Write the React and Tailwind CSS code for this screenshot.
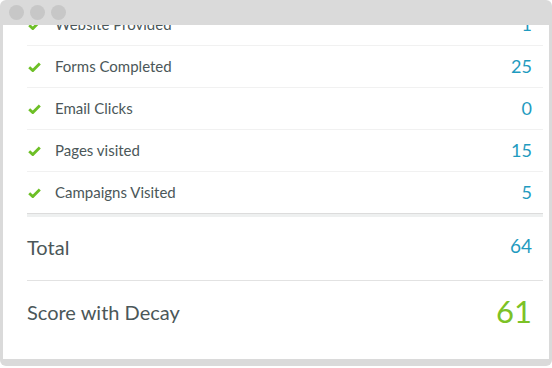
import React from "react";

const Check = () => (
  <svg width="13" height="10" viewBox="0 0 13 10" className="shrink-0">
    <path d="M1.2 5.2 L4.8 8.6 L11.8 1.4" fill="none" stroke="#6dbf26" strokeWidth="2.8" strokeLinejoin="miter" />
  </svg>
);

const rows = [
  ["Website Provided", "1"],
  ["Forms Completed", "25"],
  ["Email Clicks", "0"],
  ["Pages visited", "15"],
  ["Campaigns Visited", "5"],
];

export default function App() {
  return (
    <div className="w-[552px] h-[368px] bg-white overflow-hidden" style={{ fontFamily: "Lato, 'Open Sans', sans-serif" }}>
      <div className="h-[366px] bg-[#dadada] rounded-[6px] flex flex-col px-[3px] pb-[7px]">
        <div className="h-[25px] shrink-0 flex items-start pt-[5px] pl-[6px] gap-[6px]">
          <div className="w-[15px] h-[15px] rounded-full bg-[#c7c7c7]" />
          <div className="w-[15px] h-[15px] rounded-full bg-[#c7c7c7]" />
          <div className="w-[15px] h-[15px] rounded-full bg-[#c7c7c7]" />
        </div>
        <div className="flex-1 bg-white overflow-hidden pl-[24px] pr-[6px]">
          <div className="mt-[-21px]">
            {rows.map(([label, val], i) => (
              <div
                key={label}
                className={`h-[42px] flex items-center border-b ${i === rows.length - 1 ? "border-[#dcdcdc]" : "border-[#f1f1f1]"}`}
              >
                <div className="w-[28px] pl-[1px] flex items-center">
                  <Check />
                </div>
                <div className="flex-1 text-[15px] text-[#4b5759]">{label}</div>
                <div className="pr-[11px] text-[18px] text-[#1f9bc0]">{val}</div>
              </div>
            ))}
            <div className="h-[3px] bg-[#eef0f0]" />
            <div className="h-[64px] pb-[4px] flex items-center border-b border-[#e2e2e2]">
              <div className="flex-1 text-[20px] text-[#4b5759]">Total</div>
              <div className="pr-[11px] text-[19px] text-[#1f9bc0]">64</div>
            </div>
            <div className="h-[62px] pb-[1px] flex items-center">
              <div className="flex-1 text-[20px] text-[#4b5759]">Score with Decay</div>
              <div className="pr-[11px] text-[31px] text-[#7cc226]">61</div>
            </div>
          </div>
        </div>
      </div>
    </div>
  );
}
